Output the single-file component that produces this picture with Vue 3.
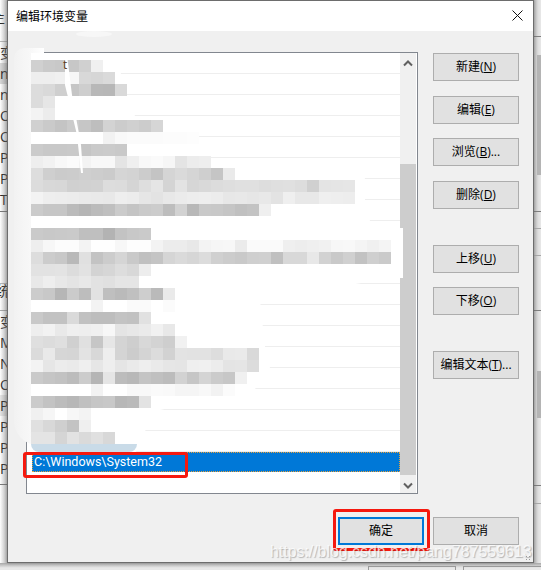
<script setup>
const topButtons = [
  { label: '新建(', key: 'N', tail: ')', cls: 'first' },
  { label: '编辑(', key: 'E', tail: ')', cls: 'm15' },
  { label: '浏览(', key: 'B', tail: ')...', cls: 'm14' },
  { label: '删除(', key: 'D', tail: ')', cls: 'm15' },
  { label: '上移(', key: 'U', tail: ')', cls: 'm36' },
  { label: '下移(', key: 'O', tail: ')', cls: 'm14' },
  { label: '编辑文本(', key: 'T', tail: ')...', cls: 'm36' },
]

const rowCount = 20

const mosaicText = [
  'd0 ca c8 c7 d0 f0',
  'ee ee f0 f6 d8 d6 da',
  'dc d9 cf c5 ce b8 b7 d9',
  'dc e6',
  'f3 ec',
  'd0 ca c4 cb c6 be d3 cc d0 cc d6',
  'ff ff ff ff ff ff f2 f9 fb fb fb fc fc fd',
  'cb c8 c8 c9 c5 ca cb c9',
  'ee f2 f8 fb f3 f8 f8 e4 ef f8 fa f6 e4 ec ee',
  'dd cf cb cc cf cd cb d5 d3 cc c4 d5 da d5 cf c5 ea',
  'dc d8 d7 d0 d1 d2 dd dc d5 de e5 d4 e3 d6 d9 dc de e0 e0 dd df e0 dd d0 e4 e5 e6',
  'f3 ee ed ec ea e9 e8 ee ec e6 e3 e8 eb ed ee ec e7 e8 e6 e8 e3 ef e8 e8 ef ee ed',
  'cb c6 c6 bb b5 bb bf cb c4 ca cc bd d2 b8 c9 c8 c5 c0 c3 ef',
  'ff',
  'ca c8 c9 ca bf bf b3 c3 c8 ca',
  'ee f7 fc fc f3 fe fe f7 fd fd f3 ec ec e8 f3 f6 f7 eb fa fa fa ef ed ef f1 f7 f8 f4 f0 f4',
  'dd cc c8 b9 e0 c3 cc d5 c9 c0 c4 d5 da d6 dc d0 cc c9 cf d0 c0 d8 d8 e8 d2 c9 d0 c2 cf ca',
  'e2 e2 e3 dc e2 d3 d6 dd d8 ed',
  'e8 ee e8 e4 e8 e2 e0 e5 e5',
  'cc c8 b6 cb bd e2 bf ba c0 ce ba ea',
  'ff ff ff ff ff f3 ff ff fa fa ff fb',
  'c9 c2 c2 da c1 bd bd c3 c1 e1',
  'ee f2 e9 ef ee f0 f7 e4 e7 ea f1 e8',
  'df dc df d0 e0 c6 e6 d4 ce d8 d3 ce f1',
  'db e9 d6 d5 e3 d8 ee d4 cc d4 dc d2 e3 e2 e2 dd e9 ea d9',
  'f3 e6 ec ea ef e6 ee e5 ea ee ea e6 e5 ef f0 ec e4 e5 dc',
  'ca c5 c2 bc cc b5 e5 bc b8 c4 c0 bc d2 c6 d4 cb c7 f0',
  'ff ff ff ff ff f2 fe fe f8 f8 fa f9 f5 f5 f8 f2 fb',
  'cb c3 bc b7 c0 c6 c8 b7 ba e3',
  'f0 f6 ff f7 f3',
  'e0 d8 cf c3 ef',
  'e4 e4 d5 e2 da e0 d8',
]
const mosaic = mosaicText.map((r) => r.split(' ').map((v) => `#${v}${v}${v}`))

const backLeftTop = ['变', 'n', 'n', 'O', 'O', 'Pa', 'Py', 'TE']
const backLeftBottom = ['变', 'M', 'N', 'O', 'Pa', 'PA', 'PP', 'PP']
</script>

<template>
  <div class="scene">
    <div class="back-left">
      <div class="back-head">主</div>
      <div class="back-group top">
        <div v-for="(t, i) in backLeftTop" :key="i" class="back-row" :class="{ hl: i === 1 }">{{ t }}</div>
      </div>
      <div class="back-group bottom">
        <div class="back-row sys">统</div>
        <div v-for="(t, i) in backLeftBottom" :key="i" class="back-row" :class="{ hl2: i === 4 }">{{ t }}</div>
      </div>
      <div class="fade-left"></div>
    </div>

    <div class="back-right">
      <i class="line" style="top: 36px"></i>
      <i class="line" style="top: 211px"></i>
      <i class="line thin" style="top: 228px"></i>
      <i class="line thin" style="top: 255px"></i>
      <i class="line" style="top: 310px"></i>
      <i class="line" style="top: 485px"></i>
      <i class="line thin" style="top: 503px"></i>
      <i class="thumb" style="top: 55px; height: 120px"></i>
      <i class="thumb" style="top: 371px; height: 47px"></i>
    </div>

    <div class="back-bottom">
      <span class="back-btn one"></span>
      <span class="back-btn two"></span>
    </div>

    <section class="dialog">
      <header class="title">
        <span class="title-text">编辑环境变量</span>
        <svg class="close" width="11" height="11" viewBox="0 0 11 11">
          <path d="M.5.5l10 10M10.5.5l-10 10" stroke="#111" stroke-width="1" fill="none" />
        </svg>
      </header>

      <div class="body">
        <div class="list">
          <div class="rows">
            <div v-for="n in rowCount - 1" :key="n" class="row"></div>
            <div class="row selected">C:\Windows\System32</div>
          </div>
          <div class="scrollbar">
            <svg class="arrow" width="10" height="7" viewBox="0 0 10 7">
              <path d="M1 5.5l4-4 4 4" stroke="#606060" stroke-width="2" fill="none" />
            </svg>
            <div class="track"><div class="bar"></div></div>
            <svg class="arrow" width="10" height="7" viewBox="0 0 10 7">
              <path d="M1 1.5l4 4 4-4" stroke="#606060" stroke-width="2" fill="none" />
            </svg>
          </div>
        </div>
        <div class="side">
          <button v-for="b in topButtons" :key="b.key" class="btn" :class="b.cls">
            {{ b.label }}<u>{{ b.key }}</u>{{ b.tail }}
          </button>
        </div>
      </div>

      <footer class="footer">
        <button class="btn primary">确定</button>
        <button class="btn">取消</button>
      </footer>

      <div class="wipe-side"></div>
      <div class="wipe-bump"></div>
      <svg class="wipe" width="400" height="420" viewBox="0 0 400 420">
        <path
          d="M58 21H108L118 63L127 84L167 105L172 126H352L357 147V168L362 189L383 196H395V246H383L252 268L257 315L262 336L247 357L152 378L137 399L128 420H23V21Z"
          fill="#fff"
        />
      </svg>
      <div class="mosaic">
        <div v-for="(row, r) in mosaic" :key="r" class="m-row">
          <i v-for="(c, k) in row" :key="k" class="cell" :style="{ background: c }"></i>
        </div>
        <div class="m-blue"></div>
      </div>
      <svg class="sliver" width="30" height="130" viewBox="0 0 30 130">
        <path d="M1 0L3 0 L8 40 L17 90L19 118L17 118L13 80L1 30Z" fill="#fff" />
      </svg>
      <span class="frag">t</span>
    </section>

    <div class="mark first-mark"></div>
    <div class="mark second-mark"></div>
    <div class="watermark">https://blog.csdn.net/pang787559613</div>
    <div class="grip"></div>
  </div>
</template>

<style>
html,
body {
  margin: 0;
  background: #fff;
}
</style>

<style scoped>
.scene {
  position: relative;
  width: 541px;
  height: 570px;
  overflow: hidden;
  background: #f4f4f4;
  font-family: "Open Sans", "Noto Sans CJK SC", sans-serif;
}

.back-left {
  position: absolute;
  left: 0;
  top: 0;
  width: 8px;
  height: 570px;
  background: #fff;
  font-size: 14px;
  color: #222;
}
.back-head {
  position: absolute;
  left: -7px;
  top: 9px;
  font-size: 12px;
}
.back-group {
  position: absolute;
  left: 0;
  width: 8px;
}
.back-group.top {
  top: 41px;
  height: 169px;
  border-top: 1px solid #bbb;
  border-bottom: 1px solid #777;
}
.back-group.bottom {
  top: 283px;
  height: 200px;
  border-top: 1px solid #bbb;
  border-bottom: 1px solid #777;
}
.back-row {
  height: 21px;
  line-height: 21px;
  white-space: nowrap;
  overflow: hidden;
}
.back-row.sys {
  height: 14px;
  line-height: 14px;
  margin-left: -4px;
  border-bottom: 1px solid #aaa;
  padding-bottom: 12px;
}
.hl,
.hl2 {
  background: #d8d8d8;
}
.hl2 {
  background: #e6e6e6;
}
.fade-left {
  position: absolute;
  left: 0;
  top: 0;
  width: 7px;
  height: 570px;
  background: linear-gradient(90deg, rgba(160, 160, 160, 0), rgba(120, 120, 120, 0.55));
}

.back-right {
  position: absolute;
  left: 534px;
  top: 0;
  width: 7px;
  height: 570px;
  background: linear-gradient(90deg, #b4b4b4, #dedede 60%, #e8e8e8);
}
.line {
  position: absolute;
  left: 0;
  right: 0;
  height: 1px;
  background: #7f7f7f;
}
.line.thin {
  background: #a8a8a8;
}
.thumb {
  position: absolute;
  left: 3px;
  right: 0;
  background: #b4b4b4;
}

.back-bottom {
  position: absolute;
  left: 0;
  right: 0;
  top: 563px;
  height: 7px;
  background: linear-gradient(180deg, #a8a8a8, #e8e8e8 70%);
}
.back-btn {
  position: absolute;
  top: 3px;
  height: 10px;
  border: 1px solid #9a9a9a;
}
.back-btn.one {
  left: 368px;
  width: 86px;
}
.back-btn.two {
  left: 463px;
  width: 86px;
}

.dialog {
  position: absolute;
  left: 7px;
  top: 0;
  width: 527px;
  height: 563px;
  box-sizing: border-box;
  border: 1px solid #6d6d6d;
  background: #f0f0f0;
  box-shadow: 0 0 3px rgba(0, 0, 0, 0.2);
}

.title {
  height: 30px;
  background: #fff;
  display: flex;
  align-items: center;
  justify-content: space-between;
  padding: 0 10px 1px 8px;
  box-sizing: border-box;
}
.title-text {
  font-size: 12px;
  color: #000;
}
.close {
  display: block;
}

.body {
  display: flex;
  align-items: flex-start;
  padding: 21px 14px 0 18px;
}

.list {
  position: relative;
  width: 392px;
  height: 442px;
  box-sizing: border-box;
  border: 1px solid #82878f;
  background: #fff;
  display: flex;
}
.rows {
  width: 373px;
  padding-left: 5px;
  box-sizing: border-box;
}
.row {
  height: 21px;
  box-sizing: border-box;
  border-bottom: 1px solid #eeeeee;
}
.row.selected {
  height: 20px;
  border: 1px dotted #e8a23c;
  background: #0078d7;
  color: #fff;
  font-family: Roboto, "Liberation Sans", sans-serif;
  font-size: 12.5px;
  line-height: 18px;
  padding-left: 1px;
}

.scrollbar {
  width: 16px;
  height: 440px;
  background: #f0f0f0;
  display: flex;
  flex-direction: column;
  align-items: center;
}
.arrow {
  flex: none;
  margin: 7px 0 6px;
  display: block;
}
.track {
  flex: 1;
  width: 100%;
  padding-top: 91px;
  box-sizing: border-box;
}
.bar {
  height: 311px;
  background: #cdcdcd;
}

.side {
  margin-left: 15px;
  display: flex;
  flex-direction: column;
  padding-top: 1px;
}

.btn {
  display: block;
  width: 86px;
  height: 28px;
  padding: 0 0 2px;
  box-sizing: border-box;
  border: 1px solid #adadad;
  background: #e1e1e1;
  font: 12px "Open Sans", "Noto Sans CJK SC", sans-serif;
  color: #000;
  white-space: nowrap;
  text-align: center;
}
.m14 {
  margin-top: 14px;
}
.m15 {
  margin-top: 15px;
}
.m36 {
  margin-top: 36px;
}

.footer {
  display: flex;
  justify-content: flex-end;
  gap: 9px;
  padding: 23px 14px 0 0;
}
.btn.primary {
  border: 2px solid #0078d7;
}

.wipe-side {
  position: absolute;
  left: 6px;
  top: 47px;
  width: 30px;
  height: 397px;
  background: linear-gradient(90deg, #f2f2f2, #f7f7f7 50%, #fff);
  border-radius: 10px 0 0 24px;
}
.wipe-bump {
  position: absolute;
  left: 68px;
  top: 30px;
  width: 36px;
  height: 6px;
  background: #f7f7f7;
  border-radius: 50%;
}
.wipe {
  position: absolute;
  left: 0;
  top: 31px;
  display: block;
}
.mosaic {
  position: absolute;
  left: 23px;
  top: 59px;
}
.m-row {
  display: flex;
  height: 12px;
}
.cell {
  display: block;
  width: 12px;
  height: 12px;
}
.m-blue {
  width: 106px;
  height: 8px;
  background: #c9dbe8;
  border-radius: 0 0 14px 14px;
}
.sliver {
  position: absolute;
  left: 56px;
  top: 54px;
  display: block;
}
.frag {
  position: absolute;
  left: 55px;
  top: 57px;
  font-size: 12px;
  line-height: 14px;
  color: #5a3a20;
}

.mark {
  position: absolute;
  box-sizing: border-box;
  border: 3px solid #f5190f;
  border-radius: 3px;
}
.first-mark {
  left: 23px;
  top: 452px;
  width: 165px;
  height: 26px;
}
.second-mark {
  left: 333px;
  top: 509px;
  width: 97px;
  height: 42px;
}

.watermark {
  position: absolute;
  left: 270px;
  top: 541px;
  width: 262px;
  font-family: "Liberation Sans", sans-serif;
  font-size: 16px;
  letter-spacing: -0.05px;
  line-height: 21px;
  color: rgba(255, 255, 255, 0.75);
  text-shadow: 1px 1px 1px rgba(0, 0, 0, 0.25);
  white-space: nowrap;
}
.grip {
  position: absolute;
  left: 525px;
  top: 555px;
  width: 7px;
  height: 6px;
  background: radial-gradient(circle, #9a9a9a 1px, transparent 1px) 0 0 / 3px 3px;
}
</style>
